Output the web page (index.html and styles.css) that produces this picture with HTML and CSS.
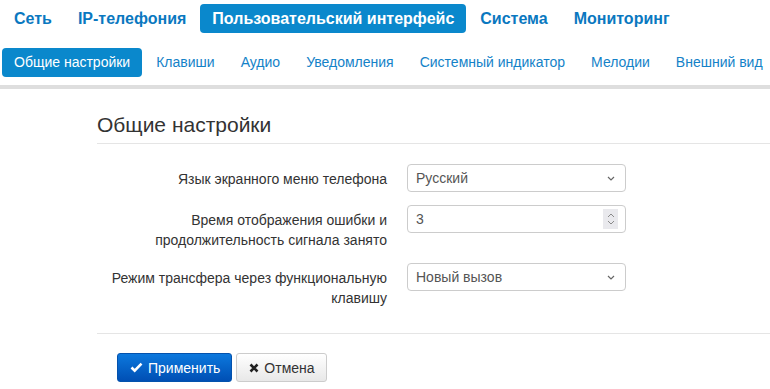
FILE: index.html
```html
<!DOCTYPE html>
<html lang="ru">

<head>
  <meta charset="UTF-8">
  <meta name="viewport" content="width=device-width, initial-scale=1.0">
  <link rel="stylesheet" href="styles.css">
  <title>Общие настройки</title>
</head>

<body>
  <!-- Main menu -->
  <ul class="nav main-nav">
    <li><a href="#">Сеть</a></li>
    <li><a href="#">IP-телефония</a></li>
    <li class="active"><a href="#">Пользовательский интерфейс</a></li>
    <li><a href="#">Система</a></li>
    <li><a href="#">Мониторинг</a></li>
  </ul>

  <!-- Sub menu -->
  <ul class="nav sub-nav">
    <li class="active"><a href="#">Общие настройки</a></li>
    <li><a href="#">Клавиши</a></li>
    <li><a href="#">Аудио</a></li>
    <li><a href="#">Уведомления</a></li>
    <li><a href="#">Системный индикатор</a></li>
    <li><a href="#">Мелодии</a></li>
    <li><a href="#">Внешний вид</a></li>
  </ul>
  <div class="nav-rule"></div>

  <div class="content">
    <h2 class="page-title">Общие настройки</h2>

    <form class="settings-form">
      <div class="form-row">
        <label for="lang">Язык экранного меню телефона</label>
        <div class="control select-wrap">
          <select id="lang" class="form-control">
            <option selected>Русский</option>
            <option>English</option>
          </select>
          <svg class="chevron" width="8" height="5" viewBox="0 0 8 5"><path d="M1 1l3 3 3-3" fill="none" stroke="#666" stroke-width="1.2"/></svg>
        </div>
      </div>

      <div class="form-row">
        <label for="err-time">Время отображения ошибки и продолжительность сигнала занято</label>
        <div class="control">
          <input id="err-time" class="form-control" type="text" value="3">
          <span class="spinner">
            <svg width="8" height="14" viewBox="0 0 8 14"><path d="M1 5l3-3 3 3M1 9l3 3 3-3" fill="none" stroke="#8a8a8a" stroke-width="1"/></svg>
          </span>
        </div>
      </div>

      <div class="form-row">
        <label for="transfer">Режим трансфера через функциональную клавишу</label>
        <div class="control select-wrap">
          <select id="transfer" class="form-control">
            <option selected>Новый вызов</option>
            <option>Текущий вызов</option>
          </select>
          <svg class="chevron" width="8" height="5" viewBox="0 0 8 5"><path d="M1 1l3 3 3-3" fill="none" stroke="#666" stroke-width="1.2"/></svg>
        </div>
      </div>

      <div class="form-actions">
        <button type="submit" class="btn btn-primary">
          <svg width="13" height="11" viewBox="0 0 13 11"><path d="M1.5 5.5l3.2 3.2 6.8-7" fill="none" stroke="#fff" stroke-width="2.6"/></svg>
          Применить
        </button>
        <button type="button" class="btn btn-default">
          <svg width="10" height="10" viewBox="0 0 10 10"><path d="M1.5 1.5l7 7M8.5 1.5l-7 7" fill="none" stroke="#222" stroke-width="2.6"/></svg>
          Отмена
        </button>
      </div>
    </form>
  </div>
</body>

</html>
```

FILE: styles.css
```css
body {
  font-family: "Liberation Sans", Arial, sans-serif;
  font-size: 14px;
  color: #333;
  background-color: #fff;
  margin: 0;
  padding: 0;
}

.nav {
  list-style: none;
  margin: 0;
  padding: 0;
  display: flex;
}

.nav li {
  margin-left: 2px;
  flex-shrink: 0;
  white-space: nowrap;
}

.nav a {
  display: block;
  padding: 0 12px;
  text-decoration: none;
  border-radius: 4px;
}

.main-nav {
  padding-top: 4px;
}

.main-nav a {
  font-size: 16px;
  font-weight: bold;
  line-height: 29px;
  color: #0a78c0;
}

.sub-nav {
  margin-top: 15px;
}

.sub-nav a {
  font-size: 14px;
  line-height: 29px;
  color: #1482c8;
}

.nav .active a {
  background-color: #0a88cc;
  color: #fff;
}

.nav-rule {
  height: 4px;
  margin-top: 8px;
  background-color: #dedede;
}

.content {
  padding-left: 97px;
}

.page-title {
  font-size: 21px;
  font-weight: normal;
  line-height: 24px;
  margin: 24px 0 0;
  padding-bottom: 6px;
  border-bottom: 1px solid #e5e5e5;
}

.settings-form {
  margin-top: 20px;
}

.form-row {
  display: grid;
  grid-template-columns: 290px 219px;
  column-gap: 20px;
  margin-bottom: 13px;
}

.form-row label {
  text-align: right;
  line-height: 20px;
  padding-top: 5px;
}

.control {
  position: relative;
  height: 28px;
}

.form-control {
  display: block;
  width: 100%;
  height: 28px;
  box-sizing: border-box;
  margin: 0;
  padding: 0 8px;
  font-family: inherit;
  font-size: 14px;
  color: #555;
  background-color: #fff;
  border: 1px solid #ccc;
  border-radius: 4px;
  appearance: none;
  outline: none;
}

.chevron {
  position: absolute;
  right: 11px;
  top: 12px;
}

.spinner {
  position: absolute;
  right: 8px;
  top: 4px;
  width: 15px;
  height: 20px;
  background-color: #e9e9ed;
  display: flex;
  align-items: center;
  justify-content: center;
}

.form-actions {
  margin-top: 25px;
  border-top: 1px solid #e5e5e5;
  padding: 19px 20px;
  display: flex;
  gap: 4px;
}

.btn {
  display: flex;
  align-items: center;
  gap: 5px;
  height: 29px;
  padding: 0 11px 0 12px;
  font-family: inherit;
  font-size: 14px;
  border-radius: 3px;
  cursor: pointer;
}

.btn-primary {
  color: #fff;
  border: 1px solid #0452ad;
  background: linear-gradient(to bottom, #0c78dd, #004fb4);
}

.btn-default {
  color: #333;
  border: 1px solid #ccc;
  background: linear-gradient(to bottom, #fff, #e8e8e8);
}
```
